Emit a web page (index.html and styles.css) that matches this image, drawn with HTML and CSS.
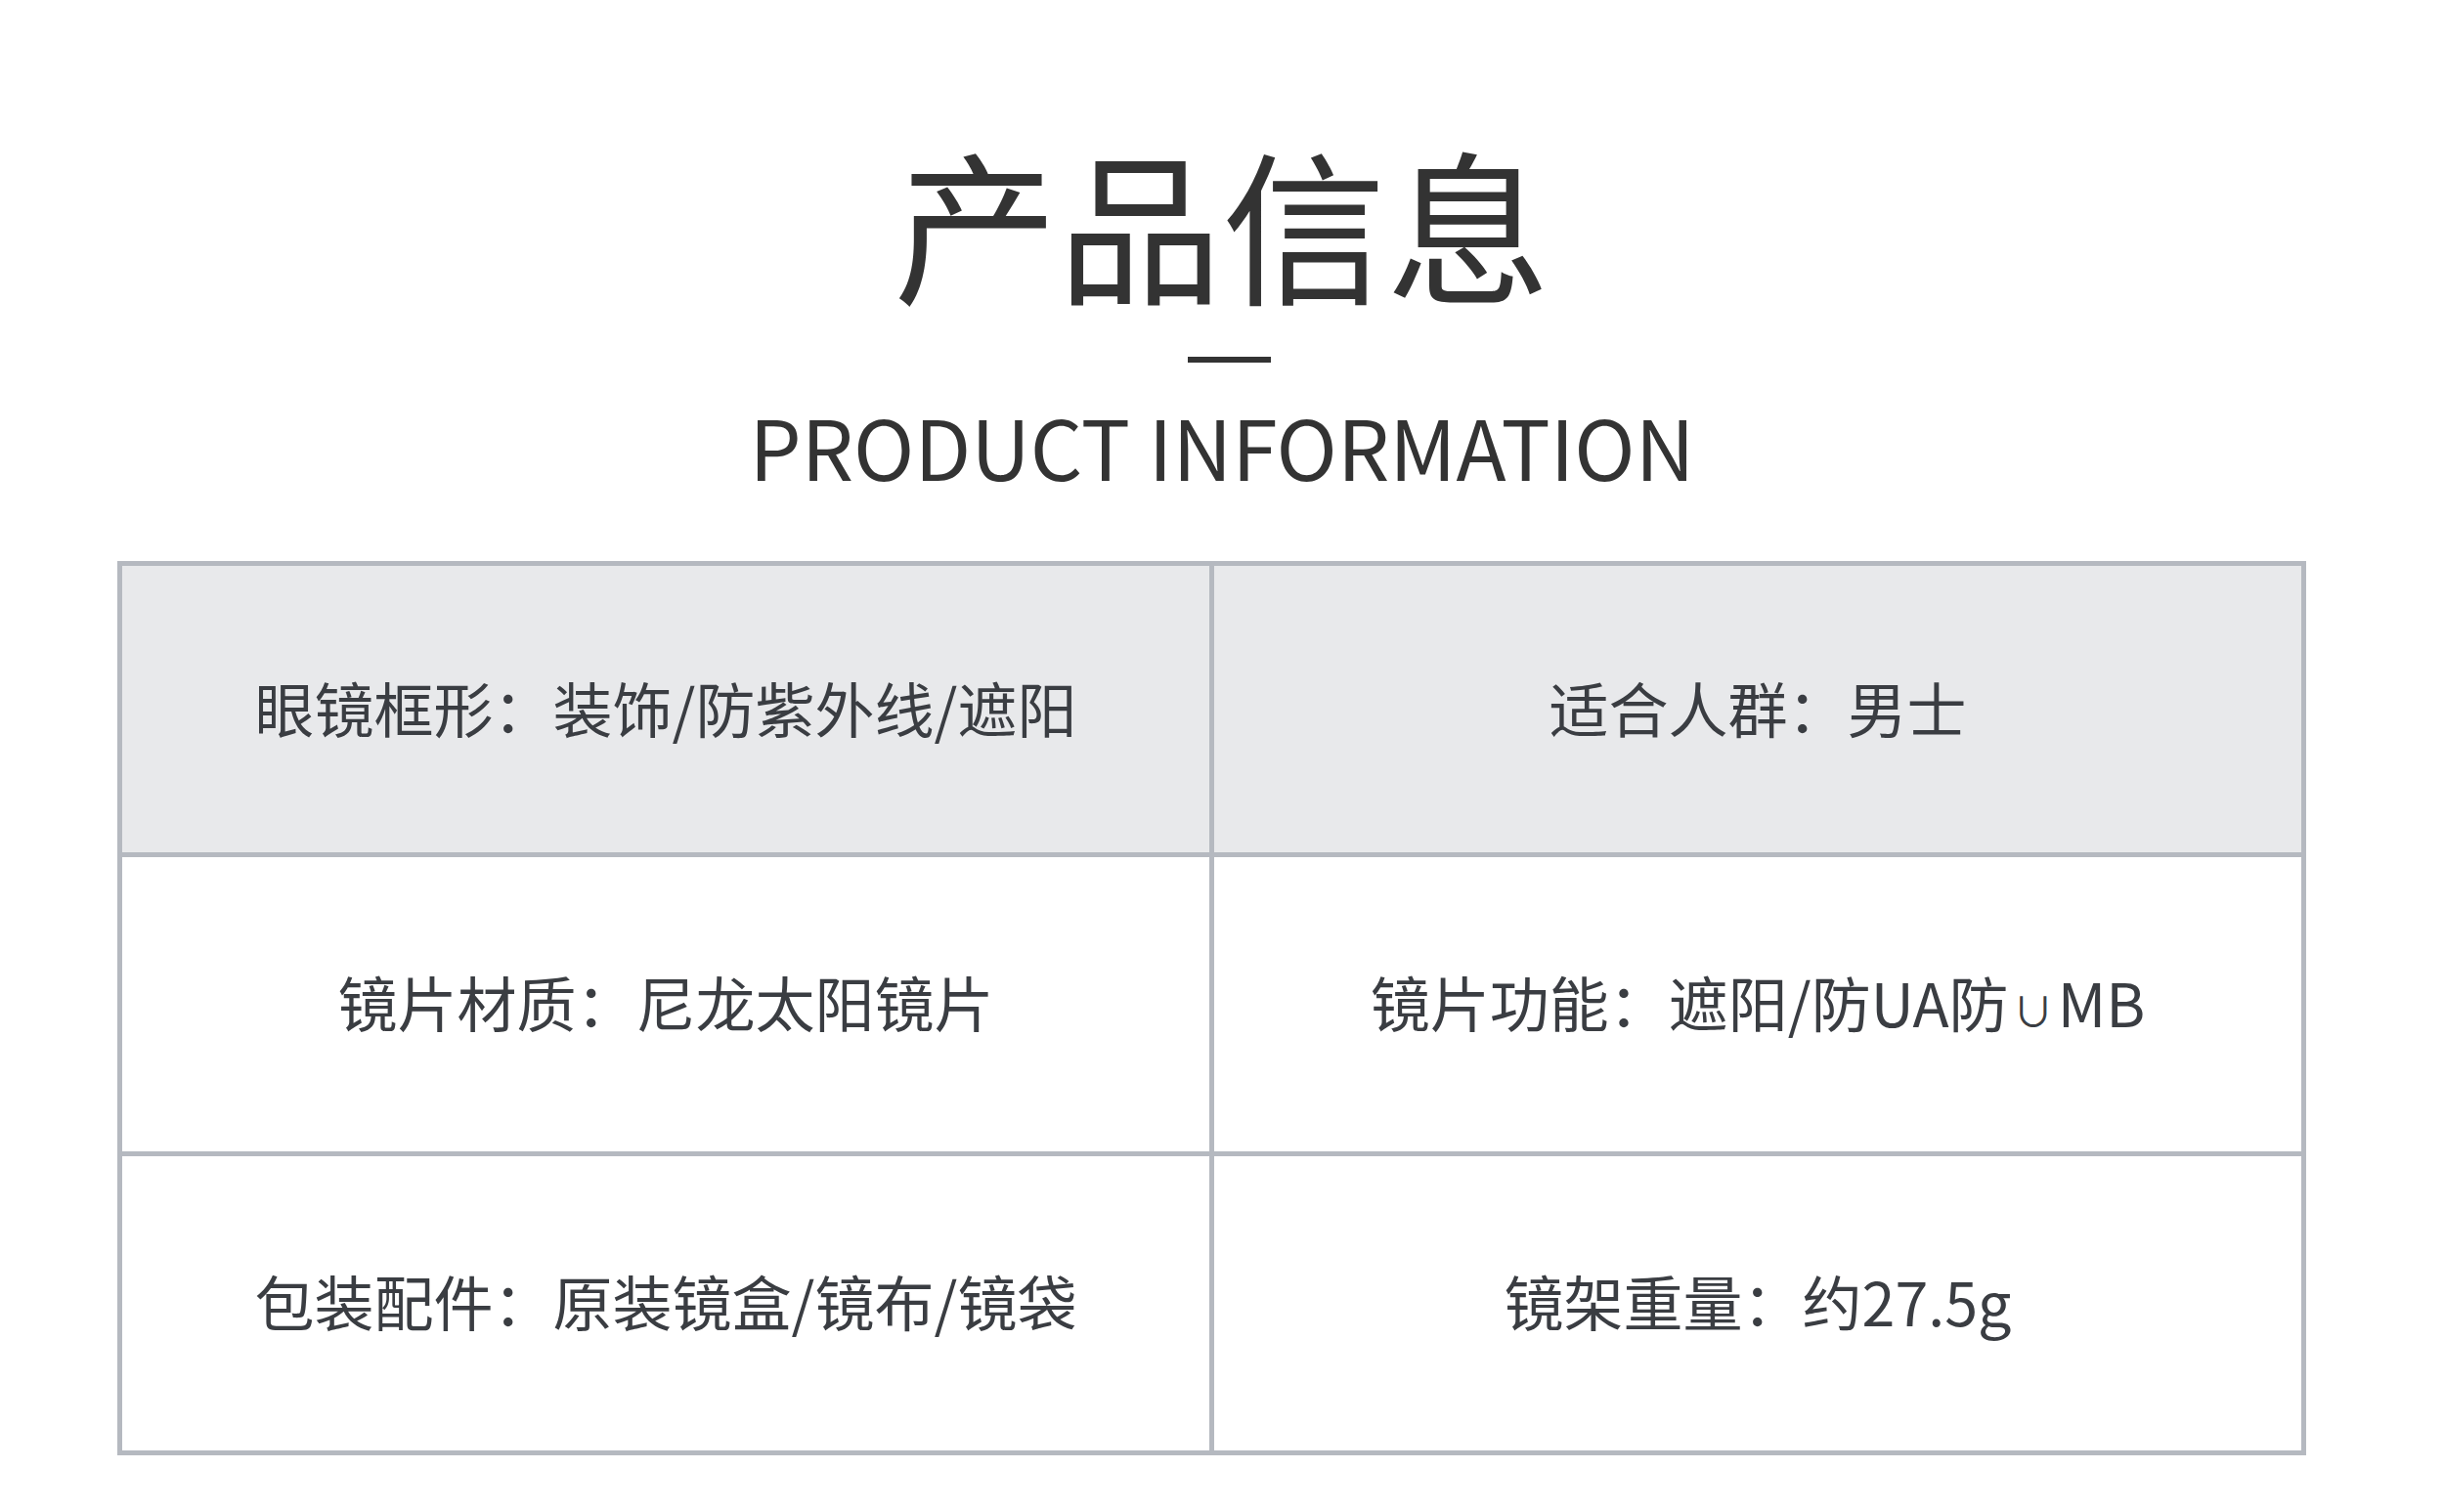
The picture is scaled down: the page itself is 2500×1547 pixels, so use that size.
FILE: index.html
```html
<!DOCTYPE html>
<html lang="zh-CN">
<head>
<meta charset="utf-8">
<title>产品信息</title>
<link rel="stylesheet" href="styles.css">
</head>
<body>
<main class="page">
  <header class="head">
    <h1 class="title">产品信息</h1>
    <div class="dash"></div>
    <p class="subtitle">PRODUCT INFORMATION</p>
  </header>
  <section class="spec">
    <div class="cell cell-head">眼镜框形：装饰/防紫外线/遮阳</div>
    <div class="cell cell-head">适合人群：男士</div>
    <div class="cell">镜片材质：尼龙太阳镜片</div>
    <div class="cell">镜片功能：遮阳/防UA防<span class="sym">∪</span>MB</div>
    <div class="cell">包装配件：原装镜盒/镜布/镜袋</div>
    <div class="cell">镜架重量：约27.5g</div>
  </section>
</main>
</body>
</html>
```

FILE: styles.css
```css
html, body {
  margin: 0;
  padding: 0;
  background: #ffffff;
}

.page {
  width: 2500px;
  height: 1547px;
  font-family: "Noto Sans CJK SC", "Noto Sans", sans-serif;
  color: #333333;
}

.head {
  display: flex;
  flex-direction: column;
  align-items: center;
  padding-top: 131px;
}

.title {
  margin: 0;
  font-size: 168px;
  line-height: 190px;
  font-weight: 400;
  color: #333333;
}

.dash {
  width: 85px;
  height: 6px;
  background: #333333;
  margin-top: 44px;
  margin-left: 15px;
}

.subtitle {
  margin: 35px 0 0;
  font-size: 84px;
  line-height: 100px;
  font-weight: 400;
  color: #333333;
}

.spec {
  position: absolute;
  left: 120px;
  top: 574px;
  display: grid;
  grid-template-columns: 1112px 1112px;
  grid-template-rows: 293px 301px 301px;
  gap: 5px;
  padding: 5px;
  background: #b5b9c0;
}

.cell {
  display: flex;
  align-items: baseline;
  justify-content: center;
  padding-top: 108px;
  box-sizing: border-box;
  background: #ffffff;
  font-size: 61px;
  line-height: 80px;
  color: #3a3d42;
}

.cell-head {
  padding-top: 105px;
  background: #e8e9eb;
}

.sym {
  font-size: 42px;
  margin: 0 4px;
}
```
